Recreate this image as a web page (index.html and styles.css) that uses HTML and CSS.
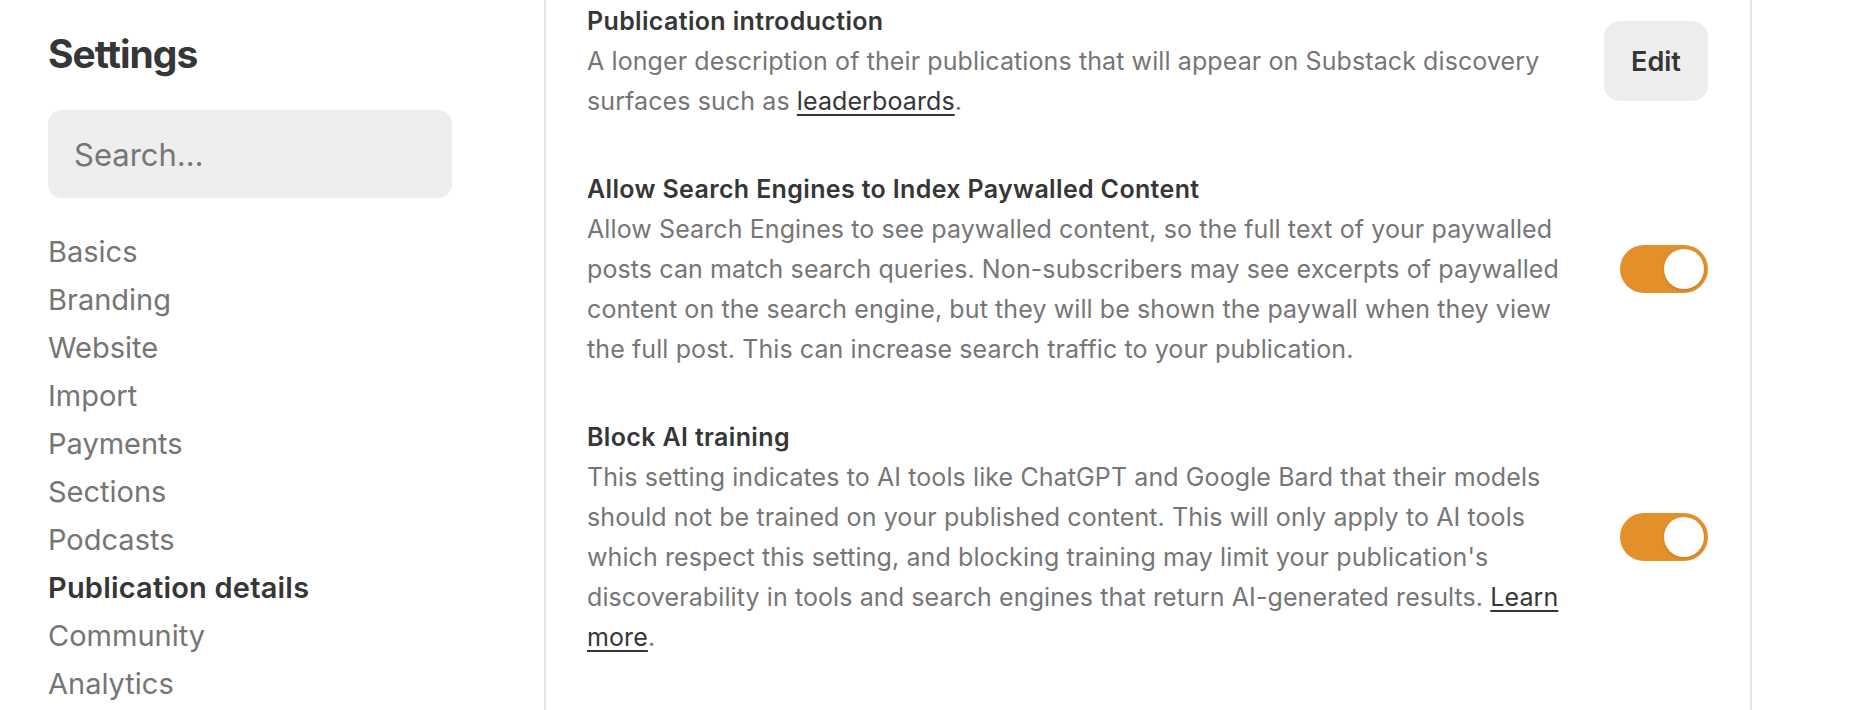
FILE: index.html
```html
<!DOCTYPE html>
<html lang="en">
  <head>
    <meta charset="UTF-8" />
    <meta name="viewport" content="width=device-width, initial-scale=1.0" />
    <title>Settings - Publication details</title>
    <link rel="stylesheet" href="styles.css">
  </head>
  <body>
    <div class="layout">
      <aside class="sidebar">
        <h1>Settings</h1>
        <input type="text" class="search" placeholder="Search…" />
        <nav class="nav">
          <a href="#">Basics</a>
          <a href="#">Branding</a>
          <a href="#">Website</a>
          <a href="#">Import</a>
          <a href="#">Payments</a>
          <a href="#">Sections</a>
          <a href="#">Podcasts</a>
          <a href="#" class="active">Publication details</a>
          <a href="#">Community</a>
          <a href="#">Analytics</a>
        </nav>
      </aside>

      <main class="panel">
        <section class="setting">
          <div class="setting-text">
            <h2>Publication introduction</h2>
            <p>
              A longer description of their publications that will appear on Substack discovery
              surfaces such as <a href="#">leaderboards</a>.
            </p>
          </div>
          <div class="setting-control">
            <button type="button" class="btn-edit">Edit</button>
          </div>
        </section>

        <section class="setting">
          <div class="setting-text">
            <h2>Allow Search Engines to Index Paywalled Content</h2>
            <p>
              Allow Search Engines to see paywalled content, so the full text of your paywalled
              posts can match search queries. Non-subscribers may see excerpts of paywalled
              content on the search engine, but they will be shown the paywall when they view
              the full post. This can increase search traffic to your publication.
            </p>
          </div>
          <div class="setting-control">
            <label class="toggle">
              <input type="checkbox" checked />
              <span class="slider"></span>
            </label>
          </div>
        </section>

        <section class="setting">
          <div class="setting-text">
            <h2>Block AI training</h2>
            <p>
              This setting indicates to AI tools like ChatGPT and Google Bard that their models
              should not be trained on your published content. This will only apply to AI tools
              which respect this setting, and blocking training may limit your publication's
              discoverability in tools and search engines that return AI-generated results.
              <a href="#">Learn more</a>.
            </p>
          </div>
          <div class="setting-control">
            <label class="toggle">
              <input type="checkbox" checked />
              <span class="slider"></span>
            </label>
          </div>
        </section>
      </main>
    </div>
  </body>
</html>
```

FILE: styles.css
```css
body {
  margin: 0;
  padding: 0;
  background: #fff;
  font-family: Inter, "Noto Sans", sans-serif;
  color: #363636;
}
.layout {
  display: flex;
  height: 710px;
  overflow: hidden;
}
.sidebar {
  width: 544px;
  flex-shrink: 0;
  padding: 30px 0 0 48px;
  box-sizing: border-box;
}
.sidebar h1 {
  margin: 0 0 32px;
  font-size: 39px;
  line-height: 48px;
  font-weight: 700;
  letter-spacing: -1px;
  color: #363636;
}
.search {
  display: block;
  width: 404px;
  height: 88px;
  box-sizing: border-box;
  padding: 0 26px;
  border: none;
  border-radius: 14px;
  background: #eeeeee;
  font-family: inherit;
  font-size: 31px;
  color: #363636;
  outline: none;
}
.search::placeholder {
  color: #777;
}
.nav {
  display: flex;
  flex-direction: column;
  margin-top: 30px;
}
.nav a {
  font-size: 29px;
  line-height: 48px;
  color: #757575;
  text-decoration: none;
}
.nav a.active {
  color: #363636;
  font-weight: 600;
  letter-spacing: 0.2px;
}
.panel {
  width: 1208px;
  flex-shrink: 0;
  box-sizing: border-box;
  padding: 1px 42px 0 41px;
  border-left: 2px solid #e6e6e6;
  border-right: 2px solid #e6e6e6;
}
.setting {
  display: flex;
  align-items: center;
  gap: 29px;
}
.setting + .setting {
  margin-top: 48px;
}
.setting-text {
  flex: 1;
}
.setting-text h2 {
  margin: 0;
  font-size: 25px;
  line-height: 40px;
  font-weight: 600;
  letter-spacing: 0.35px;
  color: #363636;
}
.setting-text p {
  margin: 0;
  font-size: 25px;
  line-height: 40px;
  letter-spacing: 0.1px;
  color: #767676;
}
.setting-text p a {
  color: #363636;
  text-decoration: underline;
  text-underline-offset: 4px;
}
.setting-control {
  width: 104px;
  display: flex;
  justify-content: flex-end;
}
.btn-edit {
  width: 104px;
  height: 80px;
  border: none;
  border-radius: 16px;
  background: #eeeeee;
  font-family: inherit;
  font-size: 27px;
  font-weight: 600;
  color: #363636;
  cursor: pointer;
}
.toggle {
  position: relative;
  display: inline-block;
  width: 88px;
  height: 48px;
}
.toggle input {
  display: none;
}
.slider {
  position: absolute;
  inset: 0;
  border-radius: 24px;
  background: #ccc;
}
.slider::after {
  content: "";
  position: absolute;
  top: 4px;
  left: 4px;
  width: 40px;
  height: 40px;
  border-radius: 50%;
  background: #fff;
  box-shadow: 0 1px 3px rgba(0, 0, 0, 0.15);
}
.toggle input:checked + .slider {
  background: #e4902a;
}
.toggle input:checked + .slider::after {
  left: 44px;
}
```
